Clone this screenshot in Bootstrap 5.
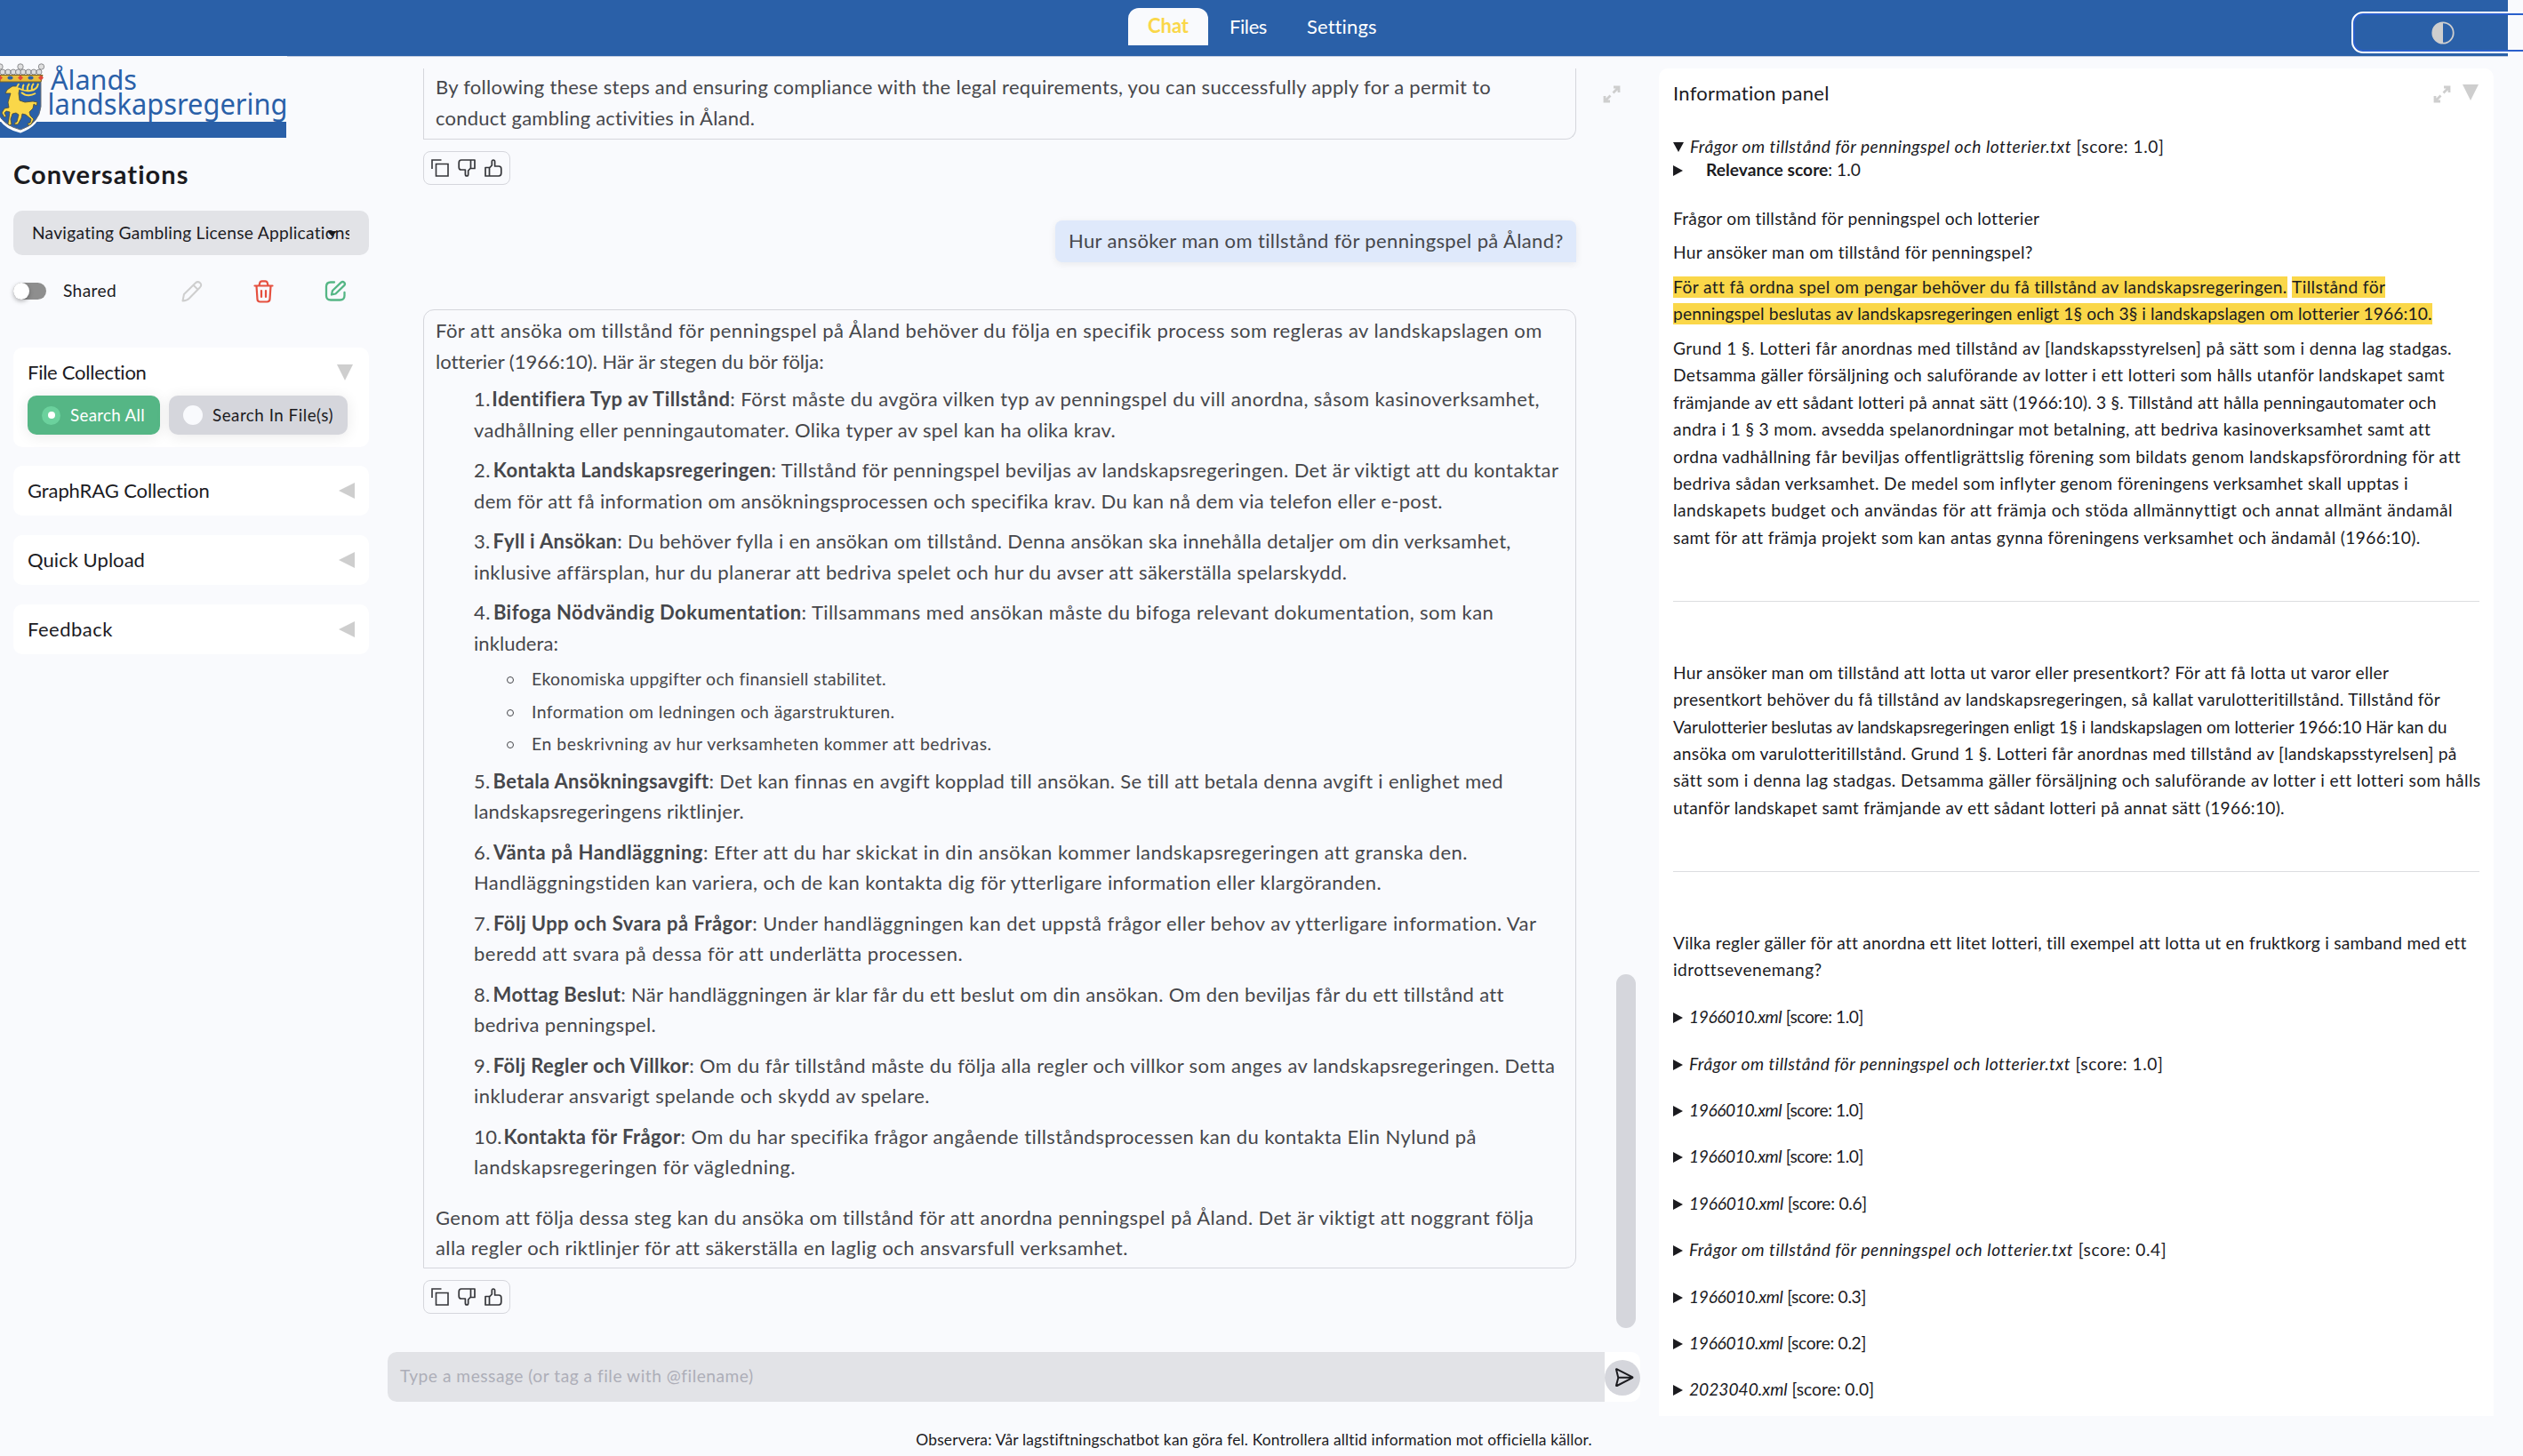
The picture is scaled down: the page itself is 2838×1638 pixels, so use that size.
<!DOCTYPE html>
<html lang="sv">
<head>
<meta charset="utf-8">
<meta name="viewport" content="width=device-width, initial-scale=1">
<title>Ålands landskapsregering – Chat</title>
<link href="https://cdn.jsdelivr.net/npm/bootstrap@5.3.0/dist/css/bootstrap.min.css" rel="stylesheet">
<style>
:root{--brand:#2a60a8;--page:#f9fafd;--ink:#1b1b1f;--soft:#46474b;--line:#d5d6dc;--mute:#cecece;--sun:#fad749}
body{font-family:Lato,"Open Sans",sans-serif;background:var(--page);color:var(--ink);width:2838px;height:1638px;overflow:hidden;font-size:19.2px;line-height:30.4px}
b{font-weight:700}
svg{display:block;flex:none}
.page-wrap{width:2821px;height:1638px}
.topbar{height:64px;background:var(--brand);border-bottom:1px solid #c3cde0;padding-top:9px}
.tab{height:42px;line-height:42px;font-size:22px;color:#fff}
.tab-on{width:90px;background:var(--page);color:var(--sun);font-weight:700;border-radius:12px 12px 0 0;margin-right:24px;line-height:40px}
.tab-files{margin-right:45px}
.topnav{margin-left:1269px}
.theme-btn{left:2645px;top:13px;width:208px;height:47px;border:2px solid #fff;border-radius:13px;box-shadow:inset 0 0 0 2px #2a5fcb;background:transparent;padding:0 0 0 88px}
.ln{display:block;width:max-content;white-space:nowrap}
.side{width:415px;padding-left:15px}
.logo{margin:-1px 0 0 -15px}
.h-conv{font-size:29px;line-height:36px;margin:23px 0 23px 0;font-weight:700}
.picker{height:50px;border-radius:10px;background:#e2e3e7;padding:0 21px;font-size:19.2px;line-height:50px}
.picker-text{width:357px;overflow:hidden}
.picker-arrow{right:36px;top:23px}
.tools{height:30px;margin-top:25px;padding-top:1px}
.switch-track{width:37px;height:19px;border-radius:10px;background:#8e8e8e;margin-right:19px}
.switch-knob{width:18px;height:19px;border-radius:50%;background:#fff;box-shadow:0 2px 5px rgba(0,0,0,.3)}
.shared{width:60px;margin-right:73px}
.ico-gap{margin-left:57px}
.box{background:#fff;border-radius:10px;padding:0 16px;height:56px;margin-bottom:22px;font-size:22px}
.box .box-head{height:56px}
.box-open{height:112px;margin-top:49px;margin-bottom:21px}
.box-open .box-head{height:54px;padding-top:2px}
.pill{height:44px;border-radius:10px;box-shadow:0 2px 16px rgba(0,0,0,.09);font-size:18.8px;padding:0 16px}
.pill-on{background:#55b685;color:#fff;width:149px;margin-right:10px}
.pill-off{background:var(--line);width:201px}
.dot{width:21px;height:21px;border-radius:50%;margin-right:11px;display:flex;align-items:center;justify-content:center}
.dot-on{background:#6bd19d}.dot-on i{width:8px;height:8px;border-radius:50%;background:#fff}
.dot-off{background:var(--page);width:22px;height:22px}
.mid{width:1409px;margin-left:21px}
.feed{width:1337px;padding:13px 0 0 40px}
.say{font-size:22px;line-height:34.65px;color:var(--soft);border:1px solid var(--line);padding:0 13px}
.say-prev{border-top:0;height:80px;padding-top:4px;border-radius:0 0 12px 0}
.say-me{align-self:flex-end;width:586px;height:47px;background:#dfe9fb;border:0;border-radius:8px 8px 0 8px;padding:6px 15px;margin-top:40px;box-shadow:0 2px 8px rgba(0,0,0,.07)}
.say-ans{margin-top:53px;height:1079px;padding-top:6px;border-radius:12px 12px 12px 0}
.steps{padding-left:43px;margin:7.9px 0 21.4px}
.steps li{margin-bottom:10.7px}
.steps,.subs{list-style:none}
.steps b{margin-left:-3px}
.steps>li:first-child b,.steps>li:last-child b{margin-left:-4.5px}
.steps>li:last-child{margin-bottom:0}
.steps>.has-subs{margin-bottom:6.2px}
.subs{padding:0 0 0 65px;margin:4.6px 0 0;font-size:19.4px;line-height:36.5px}
.steps .subs li{margin:0;position:relative}
.subs li::before{content:"";position:absolute;left:-28px;top:15px;width:8px;height:8px;border:1.5px solid var(--soft);border-radius:50%}
.acts{width:98px;height:38px;border:1px solid var(--line);border-radius:8px;margin-top:13px;padding:0 8px}
.rail{width:72px}
.rail svg{margin:32px 0 0 30px}
.thumb{width:22px;height:398px;border-radius:11px;background:var(--line);margin:980px 0 0 45px}
.composer{height:56px;background:#fff;border-radius:10px;margin-bottom:16px}
.composer-in{width:1369px;background:#e2e3e7;border-radius:10px 0 0 10px;color:#adaeb8;padding-left:14px;line-height:54px}
.send{width:40px;height:40px;background:var(--line);margin-top:9px}
.panel{width:939px;height:1516px;margin:13px 0 0 21px;background:#fff;border-radius:10px 10px 0 0;padding:0 16px}
.panel-head{height:40px;margin-bottom:33px;padding-top:13px;font-size:22px}
.panel-head .ico-exp{margin-top:6px}
.panel-head .ico-tri{margin:5px 1px 0 13px}
.panel p{margin:0 0 8.1px}
.src{height:26.2px}
.src svg{margin:10px 7px 0 0}
.src-rel{margin-bottom:28.6px}
.src-rel svg{margin-right:26px}
.hl{background:var(--sun);line-height:24px;display:inline-block;height:24px;vertical-align:top;margin-top:3px}
.rule{height:1px;background:#dcdde0;margin:55.7px 0 65px}
.hit{height:52.35px}
.hits{padding-top:14.6px}
.foot{font-size:17.4px;line-height:53px;height:45px}
</style>
</head>
<body>
<svg width="0" height="0" class="position-absolute">
<defs>
<g id="expand" fill="none" stroke="#cecece" stroke-width="2.8"><path d="M12 2h6v6M18 2l-6.500 6.500M8 18H2v-6M2 18l6.500-6.500"/></g>
<g id="copy" fill="none" stroke="#35363a" stroke-width="1.600"><path d="M1 11V1h10.500M5.500 5.500h13.500v13.500H5.500z"/></g>
<g id="up" fill="none" stroke="#35363a" stroke-width="1.700" stroke-linejoin="round"><path d="M1 9.500h4.500V19H1zM5.500 10 8.300 7V3q0-2 1.600-2 1.700 0 1.700 2v5H16q2.800 0 2.800 2.800v5Q18.800 19 16 19H5.500z"/></g>
<path id="tri-r" d="M0 0v12l11-6z" fill="#1b1b1f"/>
<path id="tri-l" d="M18 0v18L0 9z" fill="#cecece"/>
<path id="tri-d" d="M0 0h18L9 18z" fill="#cecece"/>
</defs>
</svg>
<div class="page-wrap d-flex flex-column">
<header class="topbar flex-shrink-0">
<nav class="topnav d-flex">
<div class="tab tab-on d-flex justify-content-center"><span class="ln" data-w="46">Chat</span></div>
<div class="tab tab-files"><span class="ln" data-w="42">Files</span></div>
<div class="tab"><span class="ln" data-w="78">Settings</span></div>
</nav>
<button class="theme-btn position-absolute d-flex align-items-center" aria-label="Theme"><svg width="26" height="26" viewBox="0 0 26 26"><circle cx="13" cy="13" r="11.700" fill="none" stroke="#cecece" stroke-width="1.800"/><path d="M13 1a12 12 0 0 0 0 24z" fill="#cecece"/></svg></button>
</header>
<main class="d-flex flex-grow-1">
<aside class="side">
<svg class="logo" width="323" height="92" viewBox="0 63 323 92">
<rect y="63" width="323" height="92" fill="#f9fafd"/>
<rect y="137" width="322" height="18" fill="#2a60a8"/>
<path d="M-2 88H46V122Q44 141 23 148.500Q4 144-2 130z" fill="#fff" stroke="#fff" stroke-width="2"/>
<path d="M-2 90H46V120Q44 139 23 146Q4 141-2 128z" fill="#2a60a8" stroke="#6d6f73" stroke-width="1"/>
<g fill="#dedede" stroke="#77797c" stroke-width=".8"><circle cx="0" cy="75" r="3.200"/><circle cx="23" cy="75" r="3.200"/><circle cx="46.500" cy="75" r="3.200"/><circle cx="3" cy="81" r="3"/><circle cx="9" cy="81" r="3"/><circle cx="15" cy="81" r="3"/><circle cx="20.500" cy="81" r="3"/><circle cx="26" cy="81" r="3"/><circle cx="32" cy="81" r="3"/><circle cx="38" cy="81" r="3"/><circle cx="44" cy="81" r="3"/></g>
<path d="M0 84.500H48L46 92H0z" fill="#e9bd3c" stroke="#7d6420" stroke-width="1"/>
<path d="m23 84.500 3 3-3 3-3-3zM46 84.500l3 3-3 3-3-3zM0 84.500l3 3-3 3z" fill="#e0483c"/><ellipse cx="11.500" cy="87.500" rx="3" ry="2" fill="#2a60a8"/><ellipse cx="34.500" cy="87.500" rx="3" ry="2" fill="#2a60a8"/>
<path d="M8 101 14 97l5 0 3 3-1 5 1 8 6 2 9-1 5 1-1 4-3-2-1 5-4 4 1 4 4 4-3 6-3 1-1-2 3-1 1-4-6-5-4-1-1 5-4 7-4 0 1-2 2-1 2-8-3-2-4 1-2 6 1 6-3 1-1-2 1-6 1-7-4-1-2 2 2 4-2 1-3-5 3-5 5-1-1-6 3-10-6 0z" fill="#fad749" stroke="#4b4a35" stroke-width=".8"/>
<path d="M19 98q2-3 2-4M20 99q7 4 14 3 8-1 9-8M26 102q-1-5 1-7M31 102q-1-4 2-8M36 101q-1-4 2-7M24 104q7 6 16 1" fill="none" stroke="#fad749" stroke-width="2"/>
<g font-family="Noto Sans, Open Sans, sans-serif" fill="#2a60a8" font-size="31"><text x="57" y="101" textLength="97" lengthAdjust="spacingAndGlyphs">Ålands</text><text x="53.500" y="129" font-size="32" textLength="270" lengthAdjust="spacingAndGlyphs">landskapsregering</text></g>
</svg>
<h1 class="h-conv"><span class="ln" data-w="198">Conversations</span></h1>
<div class="picker position-relative"><div class="picker-text"><span class="ln" data-w="361">Navigating Gambling License Applications</span></div><svg class="picker-arrow position-absolute" width="11" height="6"><path d="M0 0h11L5.500 6z" fill="#1b1b1f"/></svg></div>
<div class="tools d-flex align-items-center">
<div class="switch-track"><div class="switch-knob"></div></div>
<div class="shared"><span class="ln" data-w="60">Shared</span></div>
<svg width="24" height="25" viewBox="0 0 24 25" fill="none" stroke="#cecece" stroke-width="2" stroke-linejoin="round"><path d="M1.500 23.500 3 16 16 3.200q2.500-2.200 5 0t0 5L8.500 21q-2 2-7 2.500zM13.500 5.700l5.200 5.200"/></svg>
<svg class="ico-gap" width="23" height="26" viewBox="0 0 23 26" fill="none" stroke="#e5503f" stroke-width="2.200" stroke-linecap="round" stroke-linejoin="round"><path d="M1.500 6.500h20M6.500 6l1-3.500Q8 1.300 9.500 1.300h4q1.500 0 2 1.200l1 3.500M3.500 6.700l1 15q.2 2.800 3 2.800h8q2.800 0 3-2.800l1-15M9 12v7M14 12v7"/></svg>
<svg class="ico-gap" width="25" height="25" viewBox="0 0 25 25" fill="none" stroke="#55b685" stroke-width="2.300" stroke-linecap="round" stroke-linejoin="round"><path d="M11 2.500H7Q2 2.500 2 7.500v10q0 5 5 5h10.500q5 0 5-5V14M8 16.500l1-4.500 9.500-9.200q2-1.600 3.700 0 1.500 1.800 0 3.400L12.500 15.500z"/></svg>
</div>
<section class="box box-open"><div class="box-head d-flex align-items-center justify-content-between"><span class="ln" data-w="134">File Collection</span><svg width="20" height="18"><use href="#tri-d"/></svg></div>
<div class="d-flex"><div class="pill pill-on d-flex align-items-center"><span class="dot dot-on"><i></i></span><span class="ln" data-w="84">Search All</span></div><div class="pill pill-off d-flex align-items-center"><span class="dot dot-off"></span><span class="ln" data-w="136">Search In File(s)</span></div></div></section>
<section class="box"><div class="box-head d-flex align-items-center justify-content-between"><span class="ln" data-w="205">GraphRAG Collection</span><svg width="18" height="18"><use href="#tri-l"/></svg></div></section>
<section class="box"><div class="box-head d-flex align-items-center justify-content-between"><span class="ln" data-w="132">Quick Upload</span><svg width="18" height="18"><use href="#tri-l"/></svg></div></section>
<section class="box"><div class="box-head d-flex align-items-center justify-content-between"><span class="ln" data-w="96">Feedback</span><svg width="18" height="18"><use href="#tri-l"/></svg></div></section>
</aside>
<section class="mid d-flex flex-column">
<div class="d-flex flex-grow-1">
<div class="feed d-flex flex-column">
<div class="say say-prev"><span class="ln" data-w="1187">By following these steps and ensuring compliance with the legal requirements, you can successfully apply for a permit to</span><span class="ln" data-w="360">conduct gambling activities in Åland.</span></div>
<div class="acts d-flex align-items-center justify-content-between"><svg width="20" height="20"><use href="#copy"/></svg><svg width="20" height="20"><use href="#up" transform="rotate(180 10 10)"/></svg><svg width="20" height="20"><use href="#up"/></svg></div>
<div class="say say-me"><span class="ln" data-w="557">Hur ansöker man om tillstånd för penningspel på Åland?</span></div>
<div class="say say-ans">
<span class="ln" data-w="1244">För att ansöka om tillstånd för penningspel på Åland behöver du följa en specifik process som regleras av landskapslagen om</span><span class="ln" data-w="436">lotterier (1966:10). Här är stegen du bör följa:</span>
<ul class="steps">
<li><span class="ln" data-w="1199">1. <b>Identifiera Typ av Tillstånd</b>: Först måste du avgöra vilken typ av penningspel du vill anordna, såsom kasinoverksamhet,</span><span class="ln" data-w="722">vadhållning eller penningautomater. Olika typer av spel kan ha olika krav.</span></li>
<li><span class="ln" data-w="1220">2. <b>Kontakta Landskapsregeringen</b>: Tillstånd för penningspel beviljas av landskapsregeringen. Det är viktigt att du kontaktar</span><span class="ln" data-w="1089">dem för att få information om ansökningsprocessen och specifika krav. Du kan nå dem via telefon eller e-post.</span></li>
<li><span class="ln" data-w="1167">3. <b>Fyll i Ansökan</b>: Du behöver fylla i en ansökan om tillstånd. Denna ansökan ska innehålla detaljer om din verksamhet,</span><span class="ln" data-w="980">inklusive affärsplan, hur du planerar att bedriva spelet och hur du avser att säkerställa spelarskydd.</span></li>
<li class="has-subs"><span class="ln" data-w="1148">4. <b>Bifoga Nödvändig Dokumentation</b>: Tillsammans med ansökan måste du bifoga relevant dokumentation, som kan</span><span class="ln" data-w="95">inkludera:</span>
<ul class="subs"><li><span class="ln" data-w="398">Ekonomiska uppgifter och finansiell stabilitet.</span></li><li><span class="ln" data-w="409">Information om ledningen och ägarstrukturen.</span></li><li><span class="ln" data-w="517">En beskrivning av hur verksamheten kommer att bedrivas.</span></li></ul></li>
<li><span class="ln" data-w="1156">5. <b>Betala Ansökningsavgift</b>: Det kan finnas en avgift kopplad till ansökan. Se till att betala denna avgift i enlighet med</span><span class="ln" data-w="304">landskapsregeringens riktlinjer.</span></li>
<li><span class="ln" data-w="1116">6. <b>Vänta på Handläggning</b>: Efter att du har skickat in din ansökan kommer landskapsregeringen att granska den.</span><span class="ln" data-w="1021">Handläggningstiden kan variera, och de kan kontakta dig för ytterligare information eller klargöranden.</span></li>
<li><span class="ln" data-w="1195">7. <b>Följ Upp och Svara på Frågor</b>: Under handläggningen kan det uppstå frågor eller behov av ytterligare information. Var</span><span class="ln" data-w="548">beredd att svara på dessa för att underlätta processen.</span></li>
<li><span class="ln" data-w="1156">8. <b>Mottag Beslut</b>: När handläggningen är klar får du ett beslut om din ansökan. Om den beviljas får du ett tillstånd att</span><span class="ln" data-w="205">bedriva penningspel.</span></li>
<li><span class="ln" data-w="1216">9. <b>Följ Regler och Villkor</b>: Om du får tillstånd måste du följa alla regler och villkor som anges av landskapsregeringen. Detta</span><span class="ln" data-w="513">inkluderar ansvarigt spelande och skydd av spelare.</span></li>
<li><span class="ln" data-w="1128">10. <b>Kontakta för Frågor</b>: Om du har specifika frågor angående tillståndsprocessen kan du kontakta Elin Nylund på</span><span class="ln" data-w="362">landskapsregeringen för vägledning.</span></li>
</ul>
<span class="ln" data-w="1234">Genom att följa dessa steg kan du ansöka om tillstånd för att anordna penningspel på Åland. Det är viktigt att noggrant följa</span><span class="ln" data-w="778">alla regler och riktlinjer för att säkerställa en laglig och ansvarsfull verksamhet.</span>
</div>
<div class="acts d-flex align-items-center justify-content-between"><svg width="20" height="20"><use href="#copy"/></svg><svg width="20" height="20"><use href="#up" transform="rotate(180 10 10)"/></svg><svg width="20" height="20"><use href="#up"/></svg></div>
</div>
<div class="rail"><svg width="20" height="20"><use href="#expand"/></svg><div class="thumb"></div></div>
</div>
<div class="composer d-flex"><div class="composer-in"><span class="ln" data-w="397">Type a message (or tag a file with @filename)</span></div><div class="send rounded-circle d-flex align-items-center justify-content-center"><svg class="ms-1" width="22" height="22" viewBox="0 0 22 22" fill="none" stroke="#1b1b1f" stroke-width="2" stroke-linejoin="round"><path d="M2 1.500q0-.5.8-.2L20 10.200q.9.500 0 1L2.800 20q-.8.300-.8-.2L4.300 11zM4.300 10.800H20"/></svg></div></div>
</section>
<aside class="panel">
<div class="panel-head d-flex"><span class="ln me-auto" data-w="176">Information panel</span><svg class="ico-exp" width="20" height="20"><use href="#expand"/></svg><svg class="ico-tri" width="18" height="18"><use href="#tri-d"/></svg></div>
<div class="src d-flex"><svg width="12" height="11"><path d="M0 0h12L6 11z" fill="#1b1b1f"/></svg><span class="ln" data-w="532"><em>Frågor om tillstånd för penningspel och lotterier.txt</em> [score: 1.0]</span></div>
<div class="src src-rel d-flex"><svg width="11" height="12"><use href="#tri-r"/></svg><span class="ln" data-w="174"><b>Relevance score</b>: 1.0</span></div>
<p><span class="ln" data-w="412">Frågor om tillstånd för penningspel och lotterier</span></p>
<p><span class="ln" data-w="405">Hur ansöker man om tillstånd för penningspel?</span></p>
<p><span class="ln" data-w="801"><span class="hl">För att få ordna spel om pengar behöver du få tillstånd av landskapsregeringen.</span> <span class="hl">Tillstånd för</span></span><span class="ln" data-w="853"><span class="hl">penningspel beslutas av landskapsregeringen enligt 1§ och 3§ i landskapslagen om lotterier 1966:10.</span></span></p>
<p><span class="ln" data-w="875">Grund 1 §. Lotteri får anordnas med tillstånd av [landskapsstyrelsen] på sätt som i denna lag stadgas.</span><span class="ln" data-w="866">Detsamma gäller försäljning och saluförande av lotter i ett lotteri som hålls utanför landskapet samt</span><span class="ln" data-w="856">främjande av ett sådant lotteri på annat sätt (1966:10). 3 §. Tillstånd att hålla penningautomater och</span><span class="ln" data-w="851">andra i 1 § 3 mom. avsedda spelanordningar mot betalning, att bedriva kasinoverksamhet samt att</span><span class="ln" data-w="884">ordna vadhållning får beviljas offentligrättslig förening som bildats genom landskapsförordning för att</span><span class="ln" data-w="827">bedriva sådan verksamhet. De medel som inflyter genom föreningens verksamhet skall upptas i</span><span class="ln" data-w="876">landskapets budget och användas för att främja och stöda allmännyttigt och annat allmänt ändamål</span><span class="ln" data-w="840">samt för att främja projekt som kan antas gynna föreningens verksamhet och ändamål (1966:10).</span></p>
<div class="rule"></div>
<p><span class="ln" data-w="803">Hur ansöker man om tillstånd att lotta ut varor eller presentkort? För att få lotta ut varor eller</span><span class="ln" data-w="863">presentkort behöver du få tillstånd av landskapsregeringen, så kallat varulotteritillstånd. Tillstånd för</span><span class="ln" data-w="869">Varulotterier beslutas av landskapsregeringen enligt 1§ i landskapslagen om lotterier 1966:10 Här kan du</span><span class="ln" data-w="881">ansöka om varulotteritillstånd. Grund 1 §. Lotteri får anordnas med tillstånd av [landskapsstyrelsen] på</span><span class="ln" data-w="906">sätt som i denna lag stadgas. Detsamma gäller försäljning och saluförande av lotter i ett lotteri som hålls</span><span class="ln" data-w="686">utanför landskapet samt främjande av ett sådant lotteri på annat sätt (1966:10).</span></p>
<div class="rule"></div>
<p><span class="ln" data-w="889">Vilka regler gäller för att anordna ett litet lotteri, till exempel att lotta ut en fruktkorg i samband med ett</span><span class="ln" data-w="167">idrottsevenemang?</span></p>
<div class="hits">
<div class="hit src d-flex"><svg width="11" height="12"><use href="#tri-r"/></svg><span class="ln" data-w="196"><em>1966010.xml</em> [score: 1.0]</span></div>
<div class="hit src d-flex"><svg width="11" height="12"><use href="#tri-r"/></svg><span class="ln" data-w="532"><em>Frågor om tillstånd för penningspel och lotterier.txt</em> [score: 1.0]</span></div>
<div class="hit src d-flex"><svg width="11" height="12"><use href="#tri-r"/></svg><span class="ln" data-w="196"><em>1966010.xml</em> [score: 1.0]</span></div>
<div class="hit src d-flex"><svg width="11" height="12"><use href="#tri-r"/></svg><span class="ln" data-w="196"><em>1966010.xml</em> [score: 1.0]</span></div>
<div class="hit src d-flex"><svg width="11" height="12"><use href="#tri-r"/></svg><span class="ln" data-w="200"><em>1966010.xml</em> [score: 0.6]</span></div>
<div class="hit src d-flex"><svg width="11" height="12"><use href="#tri-r"/></svg><span class="ln" data-w="536"><em>Frågor om tillstånd för penningspel och lotterier.txt</em> [score: 0.4]</span></div>
<div class="hit src d-flex"><svg width="11" height="12"><use href="#tri-r"/></svg><span class="ln" data-w="199"><em>1966010.xml</em> [score: 0.3]</span></div>
<div class="hit src d-flex"><svg width="11" height="12"><use href="#tri-r"/></svg><span class="ln" data-w="199"><em>1966010.xml</em> [score: 0.2]</span></div>
<div class="src d-flex"><svg width="11" height="12"><use href="#tri-r"/></svg><span class="ln" data-w="208"><em>2023040.xml</em> [score: 0.0]</span></div>
</div>
</aside>
</main>
<footer class="foot d-flex justify-content-center flex-shrink-0"><span class="ln" data-w="760">Observera: Vår lagstiftningschatbot kan göra fel. Kontrollera alltid information mot officiella källor.</span></footer>
</div>
<script src="https://cdn.jsdelivr.net/npm/bootstrap@5.3.0/dist/js/bootstrap.bundle.min.js"></script>
<script>
// Track each line of text out to its set measure.
document.querySelectorAll('.ln[data-w]').forEach(function (el) {
  var gap = (el.dataset.w - el.getBoundingClientRect().width) / el.textContent.length;
  el.style.letterSpacing = gap.toFixed(3) + 'px';
});
</script>
</body>
</html>
